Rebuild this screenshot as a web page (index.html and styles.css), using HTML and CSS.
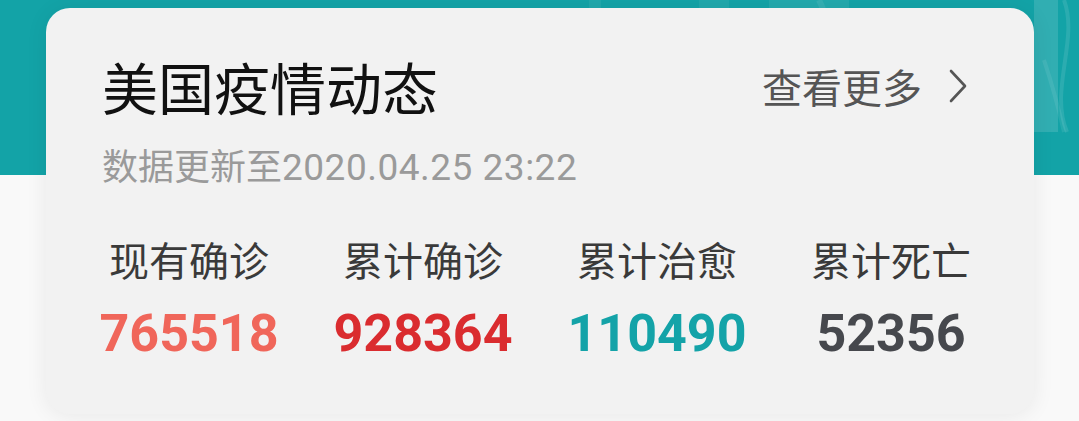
FILE: index.html
```html
<!DOCTYPE html>
<html lang="zh-CN">
<head>
<meta charset="utf-8">
<title>美国疫情动态</title>
<link rel="stylesheet" href="styles.css">
</head>
<body>
<div class="page">
  <svg class="band-deco" width="560" height="175" viewBox="0 0 560 175" aria-hidden="true">
    <rect x="70" y="0" width="12" height="132" fill="#ffffff" fill-opacity="0.06"/>
    <rect x="180" y="0" width="30" height="132" fill="#ffffff" fill-opacity="0.06"/>
    <rect x="250" y="0" width="80" height="132" fill="#ffffff" fill-opacity="0.07"/>
    <rect x="515" y="0" width="24" height="132" fill="#ffffff" fill-opacity="0.13"/>
    <path d="M300 0 C320 40 310 90 330 132" fill="none" stroke="#ffffff" stroke-opacity="0.08" stroke-width="6"/>
    <path d="M545 0 C560 40 530 90 548 132" fill="none" stroke="#ffffff" stroke-opacity="0.10" stroke-width="4"/>
    <path d="M525 60 C535 90 540 110 545 132" fill="none" stroke="#ffffff" stroke-opacity="0.08" stroke-width="4"/>
  </svg>
  <section class="card">
    <div class="card-head">
      <h1 class="title">美国疫情动态</h1>
      <a class="more">查看更多<svg class="chev" width="20" height="34" viewBox="0 0 20 34"><path d="M3 2 L17 17 L3 32" fill="none" stroke="#555" stroke-width="2.6" stroke-linecap="round" stroke-linejoin="round"/></svg></a>
    </div>
    <p class="updated">数据更新至<span class="date">2020.04.25 23:22</span></p>
    <div class="stats">
      <div class="stat">
        <div class="label">现有确诊</div>
        <div class="num num-current">765518</div>
      </div>
      <div class="stat">
        <div class="label">累计确诊</div>
        <div class="num num-total">928364</div>
      </div>
      <div class="stat">
        <div class="label">累计治愈</div>
        <div class="num num-cured">110490</div>
      </div>
      <div class="stat">
        <div class="label">累计死亡</div>
        <div class="num num-dead">52356</div>
      </div>
    </div>
  </section>
</div>
</body>
</html>
```

FILE: styles.css
```css
* { box-sizing: border-box; }
html, body { margin: 0; padding: 0; }
body {
  width: 1079px;
  height: 421px;
  overflow: hidden;
  background: #f9f9f9;
  font-family: "Roboto", "Noto Sans CJK SC", sans-serif;
}
.page {
  position: relative;
  height: 421px;
  padding-top: 8px;
  background: linear-gradient(#13a3a7 0, #13a3a7 175px, #f9f9f9 175px);
}
.band-deco {
  position: absolute;
  top: 0;
  right: 0;
}
.card {
  position: relative;
  width: 988px;
  margin-left: 46px;
  padding: 50px 26px 54px;
  background: #f2f2f2;
  border-radius: 24px;
  box-shadow: 0 2px 22px rgba(0, 0, 0, 0.07);
}
.card-head {
  display: flex;
  align-items: center;
  justify-content: space-between;
  padding: 0 40px 0 30px;
}
.title {
  margin: 0;
  font-family: "Noto Sans CJK SC", sans-serif;
  font-weight: 400;
  font-size: 56px;
  line-height: 1;
  color: #111;
}
.more {
  display: flex;
  align-items: center;
  font-family: "Noto Sans CJK SC", sans-serif;
  font-size: 40px;
  line-height: 1;
  color: #555;
}
.chev {
  margin-left: 26px;
}
.updated {
  margin: 35px 0 0 30px;
  font-size: 36px;
  line-height: 1;
  color: #9a9a9a;
}
.date {
  font-size: 37px;
  letter-spacing: 0.5px;
}
.stats {
  display: grid;
  grid-template-columns: repeat(4, 1fr);
  margin-top: 53px;
}
.stat {
  display: flex;
  flex-direction: column;
  align-items: center;
}
.label {
  font-family: "Noto Sans CJK SC", sans-serif;
  font-size: 40px;
  line-height: 1;
  color: #3a3a3a;
}
.num {
  margin-top: 29px;
  font-family: "Roboto", sans-serif;
  font-weight: 700;
  font-size: 52px;
  line-height: 1;
}
.num-current { color: #f0665a; }
.num-total { color: #da2c2f; }
.num-cured { color: #14a3a8; }
.num-dead { color: #46484d; }
```
